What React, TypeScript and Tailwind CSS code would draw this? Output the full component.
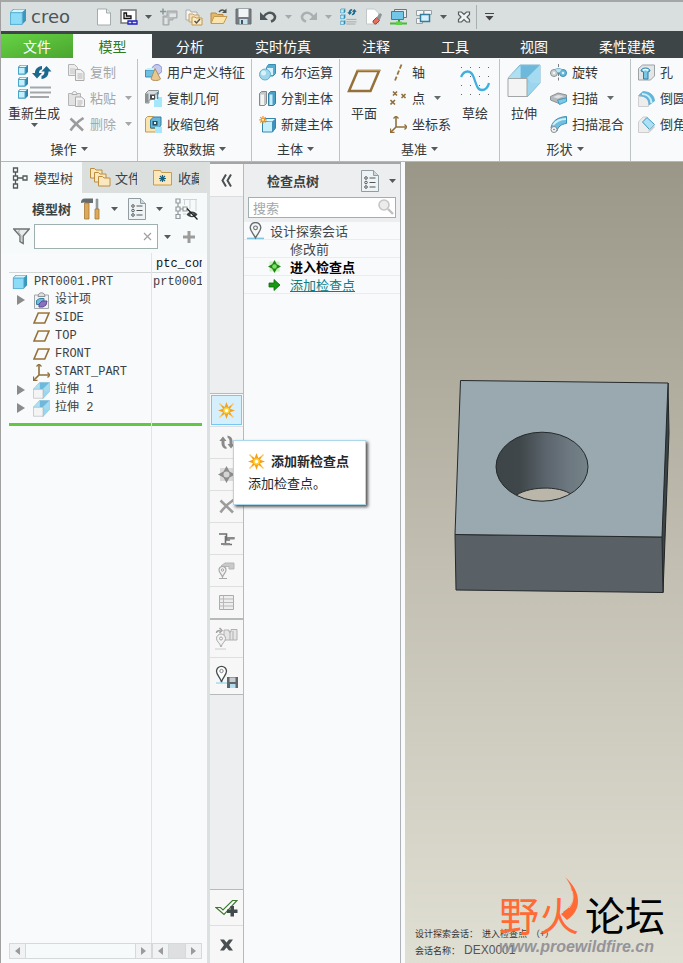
import * as React from 'react'

type IconProps = { w?: number; h?: number; box?: string; className?: string; children: React.ReactNode }

function Icon({ w = 17, h = 17, box = '0 0 17 17', className, children }: IconProps) {
  return (
    <svg width={w} height={h} viewBox={box} fill="none" className={'shrink-0 ' + (className ?? '')} aria-hidden="true">
      {children}
    </svg>
  )
}

function Caret({ className = 'text-[#555b5d]' }: { className?: string }) {
  return (
    <Icon w={7} h={4} box="0 0 7 4" className={className}>
      <path d="M0 0h7L3.5 4z" fill="currentColor" />
    </Icon>
  )
}

/* ---------- small icons ---------- */

function CubeIcon({ size = 17 }: { size?: number }) {
  return (
    <Icon w={size} h={size}>
      <path d="M1 4l3-3h12v11l-4 4H1z" fill="#3d93ba" />
      <path d="M1.500 4L4.500 1.500H15.500L12.500 4z" fill="#d3f4fd" />
      <path d="M12.500 4.500L15.500 2v9.500L12.500 15z" fill="#3a97be" />
      <path d="M1.500 4.500h11v11h-11z" fill="#8cdcf8" stroke="#5fb4d6" strokeWidth=".8" />
    </Icon>
  )
}

function PageIcon() {
  return (
    <Icon w={16} h={18} box="0 0 16 18">
      <path d="M1.500 1h9l4 4v12h-13z" fill="#fff" stroke="#a3abad" />
      <path d="M10.500 1v4h4" fill="#e6ebec" stroke="#a3abad" />
    </Icon>
  )
}

function ActivateIcon() {
  return (
    <Icon w={18} h={16} box="0 0 18 16">
      <path d="M1 1h15v13H1z" fill="#fff" stroke="#777" strokeWidth="1.500" />
      <path d="M4 4h2.500v3H11v2.500H4z" fill="#eee" stroke="#111" strokeWidth="1.300" />
      <path d="M8 12h9v3H8zM12 12v3" fill="#dfe3ff" stroke="#1d1dbb" strokeWidth="1.300" />
    </Icon>
  )
}

function AssembleIcon() {
  return (
    <Icon w={18} h={18} box="0 0 18 18">
      <path d="M7 3h10v7h-4v2h-4v5H3V8h4z" fill="#b9bdbe" stroke="#a3a8aa" />
      <path d="M9.500 5.500H16V9H9.500zM4.500 10h3v6h-3z" fill="#e2e5e6" />
      <path d="M0 3.500h6M3 .5v6" stroke="#8c9395" strokeWidth="1.500" />
    </Icon>
  )
}

function WorkDirIcon() {
  return (
    <Icon w={18} h={18} box="0 0 18 18">
      <path d="M1 2h4l1 2h6v8H1z" fill="#f5f5f3" stroke="#a9adae" />
      <path d="M4 6h4l1 1h5v7H4z" fill="#f3dfb8" stroke="#c4a36a" />
      <path d="M7 9h3l1 1h6v7H7z" fill="#fbecc8" stroke="#c09850" />
      <path d="M9.500 13l2 2 3.500-4" stroke="#555" strokeWidth="1.500" />
    </Icon>
  )
}

function OpenIcon() {
  return (
    <Icon w={18} h={17} box="0 0 18 17">
      <path d="M1 5h5l1.500 1.500H13V15H1z" fill="#e2b868" stroke="#b98c3e" />
      <path d="M1 15.500L4 8.500h13L13.500 15.500z" fill="#fbe3ac" stroke="#c49a4e" />
      <path d="M9 4c2-2.500 4.500-2.500 6-.5" stroke="#555" strokeWidth="1.500" />
      <path d="M16.500.5V5H12z" fill="#555" />
    </Icon>
  )
}

function SaveIcon({ size = 17 }: { size?: number }) {
  return (
    <Icon w={size} h={size}>
      <path d="M1 1h15v15H1z" fill="#767d80" stroke="#656c6f" />
      <path d="M3.500 1h10v8h-10z" fill="#f2f5f6" />
      <path d="M4.500 11h8v5h-8z" fill="#bfe4f4" />
      <path d="M6 12h2v4H6z" fill="#4a5053" />
    </Icon>
  )
}

function UndoIcon({ color = '#4d5659', flip = false }: { color?: string; flip?: boolean }) {
  return (
    <Icon w={17} h={13} box="0 0 17 13" className={flip ? '-scale-x-100' : ''}>
      <path d="M3.500 7C6 2.500 11 1.500 13.500 4s2 6-2.500 7.500" stroke={color} strokeWidth="2.500" />
      <path d="M0 2v8h8z" fill={color} />
    </Icon>
  )
}

function RegenIcon({ w = 35, h = 35 }: { w?: number; h?: number }) {
  return (
    <Icon w={w} h={h} box="0 0 35 35">
      {[1, 13, 25].map((y) => (
        <g key={y}>
          <path d={`M1 ${y + 2}l2-2h8v7l-2.500 2.500H1z`} fill="#2f86ac" />
          <path d={`M1.500 ${y + 2.500}h6.500v6.500h-6.500z`} fill="#c4effc" stroke="#4aa5cc" />
          <path d={`M2 ${y + 2}l1.500-1.500H10.500L8.500 ${y + 2}z`} fill="#e6f9fe" />
        </g>
      ))}
      <path d="M18 9c0-4 2.500-6.500 7-7v3.200c-2 .3-3 1.500-3 3.800h3l-5 5.500L15 9z" fill="#1b6a8d" />
      <path d="M31.500 7.500c0 4.500-2.500 7-7 7.500v-3.200c2-.3 3-1.600 3-4.300h-3l5-5.500 5 5.500z" fill="#1b6a8d" />
      <path d="M13 23.500h21M13 28.500h21M13 33h19" stroke="#a4a8aa" strokeWidth="2" />
    </Icon>
  )
}

function EraseIcon() {
  return (
    <Icon w={18} h={18} box="0 0 18 18">
      <path d="M1.500 1h8l4 4v11h-12z" fill="#fff" stroke="#c2c8ca" />
      <path d="M8 13l3.500-3.500 3 3L11 16c-1.500.5-3.500-1.500-3-3z" fill="#e2705e" stroke="#a14234" />
      <path d="M11.500 9.500L15 5l2 1.500-2.500 6z" fill="#8d9497" />
    </Icon>
  )
}

function DisplayIcon() {
  return (
    <Icon w={18} h={18} box="0 0 18 18">
      <path d="M4.500 1.500h12v8h-12z" fill="#e4ecee" stroke="#6e787b" />
      <path d="M1.500 3.500h12v8h-12z" fill="#74c6e8" stroke="#3b7f9d" />
      <path d="M9 12v4" stroke="#3c9c2b" strokeWidth="2" />
      <path d="M0 15.500h17" stroke="#4bb83a" strokeWidth="2" />
      <path d="M6 13.500h6v3.500H6z" fill="#5ed04a" />
    </Icon>
  )
}

function WindowsIcon() {
  return (
    <Icon w={18} h={16} box="0 0 18 16">
      <path d="M1.500 1.500h7v5h-7zM1.500 9.500h6v5h-6z" fill="#f5f7f7" stroke="#9aa1a3" />
      <path d="M9 1.500h7.500v4H9z" fill="#f5f7f7" stroke="#9aa1a3" />
      <path d="M5.500 5.500h9v7h-9z" fill="#d6f1fb" stroke="#347d9e" strokeWidth="1.500" />
    </Icon>
  )
}

function CloseWinIcon() {
  return (
    <Icon w={14} h={12} box="0 0 14 12">
      <path d="M1.500 1H4.500L7 3.500 9.500 1h3v2.500L10 6l2.500 2.500V11h-3L7 8.500 4.500 11h-3V8.500L4 6 1.500 3.500z" fill="#f1f3f3" stroke="#555d60" strokeWidth="1.200" />
    </Icon>
  )
}

function CopyIcon() {
  return (
    <Icon>
      <path d="M.5.500h6l3 3v8h-9z" fill="#ececec" stroke="#b4b4b4" />
      <path d="M2 5h5M2 7h5M2 9h5" stroke="#c4c4c4" />
      <path d="M7.500 5.500h5l3.500 3v8H7.500z" fill="#f2f2f2" stroke="#aaa" />
      <path d="M9.500 10h5M9.500 12h5M9.500 14h5" stroke="#b4b4b4" />
    </Icon>
  )
}

function PasteIcon() {
  return (
    <Icon>
      <path d="M.5 3.500h12v12H.5z" fill="#e2e2e2" stroke="#b6b6b6" />
      <path d="M4 4.500c0-4 5-4 5 0z" fill="#f2f2f2" stroke="#adadad" />
      <path d="M7.500 7h6l3 2.500v7h-9z" fill="#f4f4f4" stroke="#aaa" />
      <path d="M9.500 11h5M9.500 13h5M9.500 15h4" stroke="#b4b4b4" />
    </Icon>
  )
}

function DeleteIcon() {
  return (
    <Icon w={16} h={15} box="0 0 16 15">
      <path d="M1.500 1.500L14 13.500M14.500 1C9 4.500 5 8.500 1.500 13.500" stroke="#9c9c9c" strokeWidth="2.600" />
    </Icon>
  )
}

function UdfIcon() {
  return (
    <Icon>
      <circle cx="12" cy="5.500" r="5" fill="#c6caef" stroke="#8a90cf" />
      <path d="M.5 6h9v7h-9z" fill="#6cc0e2" stroke="#3a8fb6" />
      <path d="M.5 6l2-2h7v2z" fill="#c8eefa" />
      <path d="M10 4.500l5.500 10.500c-2 2-8 2-9.500 0z" fill="#e8c890" stroke="#b0905c" />
    </Icon>
  )
}

function CopyGeomIcon() {
  return (
    <Icon>
      <path d="M.5 3.500l3-3h10v3.500H10v5l-6 1v3H.5z" fill="#d9dcdd" stroke="#8b9294" />
      <path d="M.5 3.500h3v9h-3z" fill="#8b9294" />
      <path d="M5 4.500h5v5H5z" fill="#4b5153" />
      <path d="M7 6h2v2H7z" fill="#fff" />
      <path d="M9 10h8v7H9zM12 7h5v4h-5z" fill="#a6e6fb" />
      <path d="M12.500 2v7" stroke="#3390ba" strokeWidth="1.500" />
    </Icon>
  )
}

function ShrinkIcon() {
  return (
    <Icon>
      <path d="M.5 2.500l2-2h6v4H6v8h9v3.500H.5z" fill="#fae3ac" stroke="#c29a50" />
      <path d="M5.500 4l3-3h7.500v8l-2 3H5.500z" fill="#69b6d8" stroke="#2f7fa3" />
      <path d="M7.500 5h5v4.500h-5z" fill="#294b5a" />
      <path d="M9 6h2v2H9z" fill="#dff3fa" />
      <path d="M10 11h7v6h-7z" fill="#a6e6fb" />
    </Icon>
  )
}

function BooleanIcon() {
  return (
    <Icon>
      <path d="M7.500 3.500l2-3h7v9l-2.500 2.500H7.500z" fill="#56add2" stroke="#3a8db1" />
      <path d="M8 4h6v7H8z" fill="#d5f2fc" />
      <circle cx="6" cy="10.500" r="5.500" fill="#9fd6ec" stroke="#66afcc" />
      <circle cx="4.500" cy="9" r="2.500" fill="#d9f2fb" />
    </Icon>
  )
}

function SplitIcon() {
  return (
    <Icon>
      <path d="M.5 3.500l2-2H7.500v12l-2 2H.5z" fill="#c2c6c8" stroke="#84898b" />
      <path d="M1.500 4.500H5V15H1.500z" fill="#f3f4f4" />
      <path d="M9.500 3.500l2-2h5v12l-2 2h-5z" fill="#4a9fc5" stroke="#337fa1" />
      <path d="M10.500 4.500h3V15h-3z" fill="#c4edfb" />
    </Icon>
  )
}

function NewBodyIcon() {
  return (
    <Icon>
      <path d="M3.500 5.500l3-3h10v9.500l-3 4h-10z" fill="#3d93ba" stroke="#3585a9" />
      <path d="M4.500 5L7 3h9l-3 2.500z" fill="#dcf5fd" />
      <path d="M4 6h9v9.500H4z" fill="#c6effc" />
      <path d="M4 0v7.500M.2 3.800h7.500M1.300 1.200l5.300 5.300M6.600 1.200L1.300 6.500" stroke="#ee9320" strokeWidth="1.200" />
      <circle cx="4" cy="3.800" r="1" fill="#fff" />
    </Icon>
  )
}

function PlaneIcon({ w = 34, h = 24, stroke = 2.5 }: { w?: number; h?: number; stroke?: number }) {
  return (
    <Icon w={w} h={h} box="0 0 34 24">
      <path d="M10.500 2h21.500l-8.500 20H2z" stroke="#957139" strokeWidth={stroke} />
      <path d="M10 1.200h23" stroke="#c8a76a" />
    </Icon>
  )
}

function AxisIcon() {
  return (
    <Icon>
      <path d="M11.500.5L5 16.500" stroke="#96743c" strokeWidth="1.800" strokeDasharray="4.500 2" />
    </Icon>
  )
}

function PointIcon() {
  return (
    <Icon>
      <path d="M3 1.500l4 4M7 1.500l-4 4M11.500 4l4 4M15.500 4l-4 4M.5 10l4.500 4.500M5 10L.5 14.500" stroke="#8f703c" strokeWidth="1.600" />
    </Icon>
  )
}

function CsysIcon() {
  return (
    <Icon>
      <path d="M6 1v10h10M6 11l-5 5" stroke="#8f703c" strokeWidth="1.600" />
      <path d="M3.500 2.500L6 0l2.500 2.500M14.500 8.500L17 11l-2.500 2.500M.5 12.500v4h4" stroke="#8f703c" strokeWidth="1.300" />
    </Icon>
  )
}

function SketchIcon() {
  return (
    <Icon w={30} h={30} box="0 0 30 30">
      {[1, 10, 19, 28].map((y) => [1, 10, 19, 28].map((x) => <path key={x + '-' + y} d={`M${x} ${y}h1v1h-1z`} fill="#666" />))}
      <path d="M1 11C4 4 11 3 14 12s4 12 8 12c4 0 6-3 7-7" stroke="#3fb0de" strokeWidth="2.300" />
    </Icon>
  )
}

function ExtrudeIcon({ w = 34, h = 34 }: { w?: number; h?: number }) {
  return (
    <Icon w={w} h={h} box="0 0 34 34">
      <path d="M1 14L13 1h20v18L20 33z" fill="#8accea" stroke="#7eb4cb" />
      <path d="M13.500 1.500h19v17h-19z" fill="#6db9dc" />
      <path d="M1 14L13.500 1.500v12.500zM20 14L33 1v18H24z" fill="#aee0f3" />
      <path d="M20 14L33 1.500V19L20 32.500z" fill="#a2d9ef" opacity=".75" />
      <path d="M1 14.500h19v18H1z" fill="#f4f4f4" stroke="#a2a6a7" />
    </Icon>
  )
}

function RevolveIcon() {
  return (
    <Icon>
      <path d="M8.500 0v17" stroke="#7a8082" strokeDasharray="3 1.500" />
      <ellipse cx="4" cy="9" rx="3.500" ry="3.500" fill="#d0d4d5" stroke="#8b9193" />
      <ellipse cx="13" cy="9" rx="3.500" ry="3.500" fill="#69bbdd" stroke="#3c8db0" />
      <path d="M5 5.500c2-1.500 5-1.500 7 0l-2 3H7z" fill="#b9e4f3" stroke="#6fabc3" strokeWidth=".8" />
      <circle cx="4" cy="9" r="1" fill="#fff" />
      <circle cx="13" cy="9" r="1.200" fill="#d9f3fc" />
    </Icon>
  )
}

function SweepIcon() {
  return (
    <Icon>
      <path d="M.5 6.500L8 3l8.500 2v3L9 9.500v4L.5 10z" fill="#b4babc" stroke="#8c9294" />
      <path d="M3 7l5-2 6 1-6 2.500z" fill="#e0e3e4" />
      <path d="M7.500 10l9-2v3.500l-7 3z" fill="#7fc9e8" stroke="#469abf" />
    </Icon>
  )
}

function BlendIcon() {
  return (
    <Icon>
      <path d="M1 12C2 5 8 1 16.500.5v7C11 8 8 11 7 15z" fill="#6fbfe1" stroke="#3e8fb4" />
      <path d="M3 9C6 5 10 3 16 3" stroke="#d0f0fb" strokeWidth="2" />
      <circle cx="4" cy="13.500" r="3" fill="#f3f3f3" stroke="#878d8f" />
      <circle cx="4" cy="13.500" r=".8" fill="#777" />
    </Icon>
  )
}

function HoleIcon() {
  return (
    <Icon>
      <path d="M.5 4.500l4-3.500h12v11l-4 4H.5z" fill="#e3e5e6" stroke="#9da2a4" />
      <path d="M3 7c0-4 9-4 9 0l-2 1v7H5.500V8z" fill="#77c6e6" stroke="#2c80a6" />
      <path d="M5 6.500c1-1.500 4-1.500 5 0" stroke="#fff" strokeWidth="1.500" />
    </Icon>
  )
}

function RoundIcon() {
  return (
    <Icon>
      <path d="M.5 6.500h10v10h-10z" fill="#ededed" stroke="#cfcfcf" />
      <path d="M.5 5.500L5 1.500c7 0 11.500 4 11.500 9.500L11 15c0-5-3-9-10.500-9.500z" fill="#62b6da" stroke="#58a7c9" strokeWidth=".6" />
      <path d="M4 4c5.500 0 9 3.500 9.500 9" stroke="#ccedf9" strokeWidth="2.200" />
    </Icon>
  )
}

function ChamferIcon() {
  return (
    <Icon>
      <path d="M.5 6L5 1h4L5 6.500 11 12v4.500H.5z" fill="#ededed" stroke="#cdcdcd" />
      <path d="M4.500 6L9 1.500l7.500 7-5 5z" fill="#a9e2f6" stroke="#4498bd" />
      <path d="M11.500 13.500l5-5v3l-5 5z" fill="#c9cdce" />
    </Icon>
  )
}

function TreeIcon() {
  return (
    <Icon w={16} h={22} box="0 0 16 22">
      <path d="M1.500 1h4v4h-4zM1.500 9h4v4h-4zM1.500 17h4v4h-4zM11 9h4v4h-4zM3.500 5v4M3.500 13v4M5.500 11H11" stroke="#53595b" strokeWidth="1.300" />
    </Icon>
  )
}

function FoldersIcon() {
  return (
    <Icon w={21} h={21} box="0 0 21 21">
      {[0, 4, 8].map((d) => (
        <path key={d} d={`M${0.5 + d} ${1.5 + d}h4l1.500 1.500h6v8h-11.500z`} fill="#fae8c0" stroke="#c08c3c" />
      ))}
    </Icon>
  )
}

function FavoriteIcon() {
  return (
    <Icon w={19} h={17} box="0 0 19 17">
      <path d="M.5 1.500h7l1 2h10V16H.5z" fill="#fbe7b9" stroke="#c69b52" />
      <path d="M9.500 6v7M6 9.500h7M7 7l5 5M12 7l-5 5" stroke="#1c627e" strokeWidth="1.200" />
    </Icon>
  )
}

function ToolsIcon() {
  return (
    <Icon w={20} h={22} box="0 0 20 22">
      <path d="M0 5c0-3 1-4.500 4-4.500h8V5H5C3 4 2 4.500 0 5z" fill="#656c70" />
      <path d="M3.500 5h4.500v16H3.500z" fill="#dcaa5c" stroke="#a67a33" strokeWidth=".8" />
      <path d="M15 1h2v10h-2z" fill="#9aa1a4" stroke="#7b8386" strokeWidth=".5" />
      <path d="M14 11h4v10h-4z" fill="#dcaa5c" stroke="#a67a33" strokeWidth=".8" />
    </Icon>
  )
}

function ListIcon() {
  return (
    <Icon w={18} h={22} box="0 0 18 22">
      <path d="M.5.5h12l5 5v16H.5z" fill="#eef4f6" stroke="#929da1" />
      <path d="M12.500.5v5h5" fill="#cdd6d9" stroke="#929da1" />
      {[8, 12.5, 17].map((y) => (
        <g key={y}>
          <circle cx="5" cy={y} r="1.300" stroke="#555" />
          <path d={`M8.500 ${y}h6`} stroke="#555" />
        </g>
      ))}
    </Icon>
  )
}

function TreeHideIcon() {
  return (
    <Icon w={23} h={22} box="0 0 23 22">
      <path d="M1 1h4v4H1zM1 9h4v4H1zM1 16.500h4v4H1zM8 9h4v4H8zM3 5v4M3 13v3.500M5 11h3" stroke="#92999b" strokeWidth="1.200" />
      <path d="M8 1.500h14M9.500 1v6M15 1v10M21 1v12M8 16h3" stroke="#ced3d4" />
      <path d="M11.500 16.500c3-4 8-4 11 0-3 3.500-8 3.500-11 0z" fill="#3f4547" />
      <circle cx="17" cy="16.500" r="1.500" fill="#fff" />
      <path d="M12 10.500l10.500 11" stroke="#222" strokeWidth="1.300" />
    </Icon>
  )
}

function FilterIcon() {
  return (
    <Icon>
      <path d="M.8 1h15.400l-6 7v7.500L7 13.500V8z" fill="#e9ebec" stroke="#6d7375" strokeWidth="1.400" />
      <path d="M7 2.500l-2 1 3 4v5" stroke="#a8adaf" />
    </Icon>
  )
}

function PlusIcon() {
  return (
    <Icon w={12} h={12} box="0 0 12 12">
      <path d="M4.500 0h3v4.500H12v3H7.500V12h-3V7.500H0v-3h4.500z" fill="#9c9c9c" />
    </Icon>
  )
}

function DesignItemsIcon() {
  return (
    <Icon>
      <path d="M1.500 3h14v13.500h-14z" fill="#f0f1f2" stroke="#a4a8aa" />
      <path d="M5 4.500c0-5 7-5 7 0z" fill="#ddd" stroke="#8e9395" />
      <path d="M3.500 8.500l3-2H11v4l-2 2H3.500z" fill="#6bbbe0" stroke="#3881a3" />
      <path d="M6 12l3-3h5l-1 4-3 2H6z" fill="#8a73bd" stroke="#5e4a94" />
    </Icon>
  )
}

function StarIcon() {
  return (
    <Icon>
      <path d="M1.500 1.500l14 14M15.500 1.500l-14 14" stroke="#fbc763" strokeWidth="1.500" />
      <path d="M8.500 0l1.800 5L14 3l-2 3.700 5 1.800-5 1.800 2 3.700-3.700-2-1.800 5-1.800-5L3 14l2-3.700-5-1.800 5-1.800L3 3l3.700 2z" fill="#f5a01c" />
      <circle cx="8.500" cy="8.500" r="3.200" fill="#ffd335" />
      <circle cx="8.500" cy="8.500" r="1.700" fill="#fff" />
    </Icon>
  )
}

function PinIcon({ w = 16, h = 17, color = '#666c6e' }: { w?: number; h?: number; color?: string }) {
  return (
    <Icon w={w} h={h} box="0 0 16 17">
      <path d="M0 15.500h16" stroke="#7fc4e0" strokeWidth="1.500" />
      <path d="M8 15C6 11 3 8.500 3 5.500a5 5 0 0110 0C13 8.500 10 11 8 15z" fill="#f4f6f7" stroke={color} strokeWidth="1.300" />
      <circle cx="8" cy="5.500" r="1.800" stroke={color} />
    </Icon>
  )
}

function CheckpointIcon({ on = false }: { on?: boolean }) {
  return (
    <Icon w={on ? 13 : 17} h={on ? 13 : 17}>
      <path d="M2 2h13v13H2z" fill={on ? '#c9efbd' : '#dadada'} />
      <path d="M8.500 0l3 5.500 5.500 3-5.500 3-3 5.500-3-5.500L0 8.500l5.500-3z" fill={on ? '#1e8413' : '#8c8c8c'} />
      <circle cx="8.500" cy="8.500" r="3" fill={on ? '#7be066' : '#d4d4d4'} />
    </Icon>
  )
}

function GoArrowIcon() {
  return (
    <Icon w={13} h={12} box="0 0 13 12">
      <path d="M1 4h5V.5L12 6l-6 5.500V8H1z" fill="#179a12" stroke="#0d6b0a" strokeWidth=".8" />
    </Icon>
  )
}

function SearchIcon() {
  return (
    <Icon w={16} h={16} box="0 0 16 16">
      <circle cx="6" cy="6" r="5" fill="#ececec" stroke="#c6c6c6" strokeWidth="1.600" />
      <path d="M10 10l5 5" stroke="#c0c0c0" strokeWidth="2.400" />
    </Icon>
  )
}

function RefreshGrayIcon() {
  return (
    <Icon w={16} h={15} box="0 0 16 15">
      <path d="M2.500 8.500V6H.3L4 1.500 7.500 6H5.500v2.500c0 2 .8 3 2 3.500v2c-3-.3-5-2.500-5-5.500z" fill="#8a8a8a" />
      <path d="M13.500 6v3h2.200L12 13.500 8.500 9h2V6c0-1.500-.8-2.800-2-3.500V.5c3 .5 5 2.500 5 5.500z" fill="#8a8a8a" />
    </Icon>
  )
}

function StampIcon() {
  return (
    <Icon w={17} h={14} box="0 0 17 14">
      <path d="M1 2h7.500v6h3.500M5 12.500h9M7.500 4v7.500M8.500 6h8" stroke="#6f6f6f" strokeWidth="1.600" />
      <path d="M3 11h9v2H3zM8.500 5h8v2.500h-6z" fill="#8a8a8a" />
    </Icon>
  )
}

function PinTagIcon() {
  return (
    <Icon>
      <path d="M3 4l4-3h9v6h-5V4.500H6z" fill="#c9c9c9" stroke="#b5b5b5" />
      <path d="M4.500 15C3.500 12 1 10.500 1 8a3.500 3.500 0 017 0c0 2.500-2.500 4-3.500 7zM1 16.500h8" fill="#f3f3f3" stroke="#a8a8a8" strokeWidth="1.200" />
      <circle cx="4.500" cy="8" r="1.200" stroke="#a8a8a8" />
    </Icon>
  )
}

function TableIcon() {
  return (
    <Icon>
      <path d="M1.500 1.500h14v14h-14z" fill="#eee" stroke="#ababab" />
      <path d="M5.500 1.500v14M1.500 5h14M1.500 8.500h14M1.500 12h14" stroke="#b9b9b9" />
    </Icon>
  )
}

function PinOpenIcon() {
  return (
    <Icon w={23} h={23} box="0 0 23 23">
      <path d="M9 3h5v2h2V2.500h6V13H9z" fill="#e5e5e5" stroke="#b0b0b0" />
      <path d="M15 4v9M18 4v9" stroke="#b0b0b0" />
      <path d="M1.500 6c0-2 1-2.500 4-2.500M4.500 1l2.500 2.500L4.500 6" stroke="#a2a2a2" strokeWidth="1.500" />
      <path d="M6 20C5 16 1.500 14.500 1.500 11.500a4.500 4.500 0 019 0C10.500 14.500 7 16 6 20z" fill="#f3f3f3" stroke="#a6a6a6" />
      <circle cx="6" cy="11.500" r="1.500" stroke="#a6a6a6" />
      <path d="M0 22h11" stroke="#ccc" />
    </Icon>
  )
}

function PinSaveIcon() {
  return (
    <Icon w={23} h={23} box="0 0 23 23">
      <path d="M1 18h13" stroke="#a6dcee" strokeWidth="1.500" />
      <path d="M6.500 17C5.500 12.500 1.500 10 1.500 6.300a5 5 0 0110 0C11.500 10 7.500 12.500 6.500 17z" fill="#fff" stroke="#474d4f" strokeWidth="1.300" />
      <circle cx="6.500" cy="6" r="1.700" stroke="#888" />
      <path d="M12 12h11v11H12z" fill="#5f676a" />
      <path d="M14.500 12.500h6V17h-6z" fill="#c8ced0" />
      <path d="M15 19h5.500v4H15z" fill="#b0dcec" />
    </Icon>
  )
}

function AcceptIcon() {
  return (
    <Icon w={23} h={18} box="0 0 23 18">
      <path d="M1 8.500h4.500L8 11 17.500 1.500H22L9 15.500z" fill="#fff" stroke="#3c7a2c" strokeWidth="1.200" />
      <path d="M15.500 7h3.500v3.500h3.500V14H19v3.500h-3.500V14H12v-3.500h3.500z" fill="#434a4c" />
    </Icon>
  )
}

function CollapseIcon() {
  return (
    <Icon w={11} h={13} box="0 0 11 13">
      <path d="M5 .5L1.500 6.500 5 12.500M10 .5L6.500 6.500l3.500 6" stroke="#4b5052" strokeWidth="2" />
    </Icon>
  )
}

/* ---------- ribbon ---------- */

type Cmd = { label: string; icon: React.ReactNode; caret?: boolean; off?: boolean }

function CommandList({ items }: { items: Cmd[] }) {
  return (
    <div className="flex flex-col">
      {items.map((c) => (
        <button key={c.label} disabled={c.off} className="flex h-[26px] items-center gap-[5px] whitespace-nowrap disabled:text-[#a5a8a9]">
          <span className="flex w-[17px] justify-center">{c.icon}</span>
          <span>{c.label}</span>
          {c.caret && <Caret className={c.off ? 'ml-1 text-[#a5a8a9]' : 'ml-1 text-[#666c6e]'} />}
        </button>
      ))}
    </div>
  )
}

function BigCommand({ label, icon, caret }: { label: string; icon: React.ReactNode; caret?: boolean }) {
  return (
    <button className="flex h-[78px] flex-col items-center whitespace-nowrap pt-1">
      <span className="flex h-9 items-center">{icon}</span>
      <span className="mt-1 leading-5">{label}</span>
      {caret && <Caret />}
    </button>
  )
}

function RibbonGroup({ title, className, children }: { title?: string; className: string; children: React.ReactNode }) {
  return (
    <section className="flex shrink-0 flex-col border-r border-[#bcc4c6]">
      <div className={'flex ' + className}>{children}</div>
      {title && (
        <button className="flex h-6 items-center justify-center gap-1 whitespace-nowrap">
          {title}
          <Caret />
        </button>
      )}
    </section>
  )
}

function Ribbon() {
  return (
    <div className="flex overflow-hidden border-b border-[#aebabc] bg-[#f8fafc] pt-px text-[13px] text-[#33383a]">
      <RibbonGroup title="操作" className="gap-2 pl-[7px] pr-[5px]">
        <BigCommand label="重新生成" icon={<RegenIcon />} caret />
        <CommandList
          items={[
            { label: '复制', icon: <CopyIcon />, off: true },
            { label: '粘贴', icon: <PasteIcon />, caret: true, off: true },
            { label: '删除', icon: <DeleteIcon />, caret: true, off: true },
          ]}
        />
      </RibbonGroup>
      <RibbonGroup title="获取数据" className="pl-[7px] pr-[6px]">
        <CommandList
          items={[
            { label: '用户定义特征', icon: <UdfIcon /> },
            { label: '复制几何', icon: <CopyGeomIcon /> },
            { label: '收缩包络', icon: <ShrinkIcon /> },
          ]}
        />
      </RibbonGroup>
      <RibbonGroup title="主体" className="pl-[7px] pr-[6px]">
        <CommandList
          items={[
            { label: '布尔运算', icon: <BooleanIcon /> },
            { label: '分割主体', icon: <SplitIcon /> },
            { label: '新建主体', icon: <NewBodyIcon /> },
          ]}
        />
      </RibbonGroup>
      <RibbonGroup title="基准" className="gap-[9px] pl-[7px] pr-[9px]">
        <BigCommand label="平面" icon={<PlaneIcon />} />
        <CommandList
          items={[
            { label: '轴', icon: <AxisIcon /> },
            { label: '点', icon: <PointIcon />, caret: true },
            { label: '坐标系', icon: <CsysIcon /> },
          ]}
        />
        <BigCommand label="草绘" icon={<SketchIcon />} />
      </RibbonGroup>
      <RibbonGroup title="形状" className="gap-[9px] pl-[7px] pr-[6px]">
        <BigCommand label="拉伸" icon={<ExtrudeIcon />} />
        <CommandList
          items={[
            { label: '旋转', icon: <RevolveIcon /> },
            { label: '扫描', icon: <SweepIcon />, caret: true },
            { label: '扫描混合', icon: <BlendIcon /> },
          ]}
        />
      </RibbonGroup>
      <RibbonGroup className="pl-[7px]">
        <CommandList
          items={[
            { label: '孔', icon: <HoleIcon /> },
            { label: '倒圆角', icon: <RoundIcon />, caret: true },
            { label: '倒角', icon: <ChamferIcon />, caret: true },
          ]}
        />
      </RibbonGroup>
    </div>
  )
}

/* ---------- title bar and tabs ---------- */

function TitleBar() {
  const tools: { name: string; icon: React.ReactNode; menu?: boolean; off?: boolean }[] = [
    { name: '新建', icon: <PageIcon /> },
    { name: '激活', icon: <ActivateIcon />, menu: true },
    { name: '组装', icon: <AssembleIcon /> },
    { name: '工作目录', icon: <WorkDirIcon /> },
    { name: '打开', icon: <OpenIcon /> },
    { name: '保存', icon: <SaveIcon /> },
    { name: '撤销', icon: <UndoIcon />, menu: true, off: true },
    { name: '重做', icon: <UndoIcon color="#aab0b2" flip />, menu: true, off: true },
    { name: '重新生成', icon: <RegenIcon w={17} h={17} /> },
    { name: '拭除', icon: <EraseIcon /> },
    { name: '显示', icon: <DisplayIcon /> },
    { name: '窗口', icon: <WindowsIcon />, menu: true },
    { name: '关闭', icon: <CloseWinIcon /> },
  ]
  return (
    <header className="flex h-[29px] items-center bg-[#d9dfdf]">
      <div className="flex w-[90px] shrink-0 items-center gap-1 pl-2">
        <CubeIcon size={18} />
        <span className="font-['DejaVu_Sans'] text-lg leading-5 text-[#4b5457]">creo</span>
      </div>
      {tools.map((t) => (
        <React.Fragment key={t.name}>
          <button aria-label={t.name} className="flex h-6 w-[25px] shrink-0 items-center justify-center">
            {t.icon}
          </button>
          {t.menu && (
            <button aria-label={t.name + '菜单'} className="flex h-6 w-[15px] shrink-0 items-center justify-center">
              <Caret className={t.off ? 'text-[#a5abad]' : 'text-[#555b5d]'} />
            </button>
          )}
        </React.Fragment>
      ))}
      <div className="h-6 w-px shrink-0 bg-[#a9b0b1]" />
      <button aria-label="自定义" className="flex h-6 w-6 items-center justify-center">
        <Icon w={9} h={8} box="0 0 9 8">
          <path d="M0 .5h9" stroke="#444" />
          <path d="M.5 3h8L4.500 7.500z" fill="#444" />
        </Icon>
      </button>
    </header>
  )
}

function TabBar() {
  const tabs = ['分析', '实时仿真', '注释', '工具', '视图', '柔性建模']
  return (
    <nav className="flex h-[27px] overflow-hidden bg-[#3d4547] pt-[3px] text-sm leading-6 text-white">
      <button className="w-[72px] shrink-0 bg-linear-to-br from-[#66d344] to-[#4ba52f]">文件</button>
      <button className="w-[79px] shrink-0 bg-[#f8fafc] text-[#2f7a22]">模型</button>
      {tabs.map((t) => (
        <button key={t} className="shrink-0 whitespace-nowrap pl-6 pr-[27px]">{t}</button>
      ))}
    </nav>
  )
}

/* ---------- model tree ---------- */

const treeRows = [
  { name: '设计项', icon: <DesignItemsIcon />, open: true },
  { name: 'SIDE', icon: <PlaneIcon w={17} h={12} stroke={3.2} /> },
  { name: 'TOP', icon: <PlaneIcon w={17} h={12} stroke={3.2} /> },
  { name: 'FRONT', icon: <PlaneIcon w={17} h={12} stroke={3.2} /> },
  { name: 'START_PART', icon: <CsysIcon /> },
  { name: '拉伸 1', icon: <ExtrudeIcon w={17} h={17} />, open: true },
  { name: '拉伸 2', icon: <ExtrudeIcon w={17} h={17} />, open: true },
]

function Arrow({ left = false }: { left?: boolean }) {
  return (
    <Icon w={5} h={8} box="0 0 5 8">
      <path d={left ? 'M5 0v8L0 4z' : 'M0 0v8l5-4z'} fill="#9b9b9b" />
    </Icon>
  )
}

function ScrollBar({ className, track }: { className: string; track: string }) {
  return (
    <div className={'flex h-4 border border-[#d5d9da] ' + className}>
      <button aria-label="向左滚动" className="flex w-[15px] items-center justify-center bg-[#f1f2f3]">
        <Arrow left />
      </button>
      <div className={'flex-1 border-x border-[#d5d9da] ' + track} />
      <button aria-label="向右滚动" className="flex w-[15px] items-center justify-center bg-[#f1f2f3]">
        <Arrow />
      </button>
    </div>
  )
}

function ModelTree() {
  return (
    <aside className="flex w-[209px] shrink-0 flex-col border-r-3 border-[#dbe1e1] bg-[#f8fafc] text-[13px] text-[#3c4143]">
      <div className="flex h-[31px] bg-[#dbe0df]">
        <button className="flex w-[81px] shrink-0 items-center gap-1.5 whitespace-nowrap bg-[#f6fafa] pl-[11px]">
          <TreeIcon />
          模型树
        </button>
        <button className="flex w-[63px] shrink-0 items-center gap-1 overflow-hidden whitespace-nowrap pl-2">
          <FoldersIcon />
          <span className="w-[22px] overflow-hidden text-left">文件夹</span>
        </button>
        <button className="flex min-w-0 items-center gap-1.5 overflow-hidden whitespace-nowrap pl-2">
          <FavoriteIcon />
          <span className="w-[21px] overflow-hidden text-left">收藏夹</span>
        </button>
      </div>

      <div className="flex h-[31px] items-center bg-[#f6fafa] pl-[31px]">
        <h2 className="mr-2.5 font-bold">模型树</h2>
        <button aria-label="设置" className="flex items-center gap-2.5">
          <ToolsIcon />
          <Caret />
        </button>
        <button aria-label="显示" className="ml-2.5 flex items-center gap-2.5">
          <ListIcon />
          <Caret />
        </button>
        <button aria-label="树列" className="ml-3">
          <TreeHideIcon />
        </button>
      </div>

      <div className="flex items-center bg-[#f6fafa] pb-1 pl-3">
        <FilterIcon />
        <div className="relative ml-1">
          <input aria-label="过滤" className="block h-[25px] w-[124px] border border-[#9fb0b1] bg-white px-1 outline-none" />
          <button aria-label="清除" className="absolute right-1.5 top-2">
            <Icon w={9} h={9} box="0 0 9 9">
              <path d="M1 1l7 7M8 1L1 8" stroke="#a0a0a0" strokeWidth="1.200" />
            </Icon>
          </button>
        </div>
        <button aria-label="过滤菜单" className="ml-1.5">
          <Caret />
        </button>
        <button aria-label="添加" className="ml-3">
          <PlusIcon />
        </button>
      </div>

      <div className="relative ml-2 mr-[5px] flex-1">
        <table className="w-full table-fixed text-left font-['Liberation_Mono','Noto_Sans_CJK_SC',monospace] text-xs">
          <thead>
            <tr className="h-[19px] border-b border-[#d3d7d8]">
              <th className="w-[142px] p-0" aria-label="名称" />
              <th className="overflow-hidden whitespace-nowrap p-0 pl-[5px] pt-[3px] font-normal leading-4 text-[#111]">ptc_common_name</th>
            </tr>
          </thead>
          <tbody>
            <tr className="h-[18px]">
              <td className="p-0">
                <div className="flex h-[18px] items-center gap-1.5 pl-[3px]">
                  <CubeIcon size={16} />
                  PRT0001.PRT
                </div>
              </td>
              <td className="overflow-hidden whitespace-nowrap p-0 pl-0.5">prt0001</td>
            </tr>
            {treeRows.map((r) => (
              <tr key={r.name}>
                <td className="p-0" colSpan={2}>
                  <div className="flex h-[18px] items-center gap-[5px] pl-2">
                    <span className="flex w-[11px] shrink-0">
                      {r.open && (
                        <Icon w={8} h={10} box="0 0 8 10">
                          <path d="M0 0v10l8-5z" fill="#8b8b8b" />
                        </Icon>
                      )}
                    </span>
                    <span className="flex w-[17px] shrink-0 justify-center">{r.icon}</span>
                    <span>{r.name}</span>
                  </div>
                </td>
              </tr>
            ))}
          </tbody>
        </table>
        <div className="mt-1.5 h-[3px] bg-[#62c646]" />
        <div className="absolute inset-y-0 left-[142px] w-px bg-[#e1e4e6]" />
      </div>

      <div className="mb-1 ml-2 mr-[5px] flex">
        <ScrollBar className="flex-1" track="bg-[#f6fafb]" />
        <ScrollBar className="w-[50px]" track="bg-[#dedfe1]" />
      </div>
    </aside>
  )
}

/* ---------- checkpoint side bar ---------- */

function CheckpointBar() {
  const tools = [
    { name: '更新', icon: <RefreshGrayIcon /> },
    { name: '进入检查点', icon: <CheckpointIcon /> },
    { name: '删除', icon: <DeleteIcon /> },
    { name: '合并', icon: <StampIcon /> },
    { name: '标记', icon: <PinTagIcon /> },
    { name: '表', icon: <TableIcon /> },
  ]
  return (
    <div className="flex w-[34px] shrink-0 flex-col border-r border-[#b7babb] bg-[#edeef0]">
      <button aria-label="折叠" className="flex h-[33px] items-center justify-center border-b border-[#dcdddf] bg-[#f8f8f9]">
        <CollapseIcon />
      </button>
      <div className="mt-[196px] flex flex-col border-y border-[#b7babb] bg-[#f7f7f8]">
        <div className="relative">
          <button aria-label="添加新检查点" className="m-px flex h-[30px] w-[31px] items-center justify-center border border-[#74c8f3] bg-[#d5f0fc]">
            <StarIcon />
          </button>
          <div role="tooltip" className="absolute left-[23px] top-[46px] z-10 h-[65px] w-[133px] border border-[#abd8ea] bg-white pl-3.5 pt-[9px] text-[13px] leading-[22px] text-[#25292b] shadow-[2px_2px_3px_#555]">
            <div className="flex items-center gap-1.5 whitespace-nowrap font-bold">
              <StarIcon />
              添加新检查点
            </div>
            <p className="whitespace-nowrap">添加检查点。</p>
          </div>
        </div>
        {tools.map((t) => (
          <button key={t.name} aria-label={t.name} className="flex h-8 items-center justify-center border-t border-[#dedfe0]">
            {t.icon}
          </button>
        ))}
        <button aria-label="打开会话" className="flex h-[39px] items-center justify-center border-t-2 border-[#b7babb]">
          <PinOpenIcon />
        </button>
        <button aria-label="保存会话" className="flex h-[37px] items-center justify-center border-t border-[#dedfe0]">
          <PinSaveIcon />
        </button>
      </div>
      <div className="mt-auto flex flex-col border-t border-[#b7babb] bg-[#f7f7f8]">
        <button aria-label="确认" className="flex h-9 items-center justify-center border-b border-[#dedfe0]">
          <AcceptIcon />
        </button>
        <button aria-label="退出" className="flex h-[37px] items-center justify-center">
          <Icon w={13} h={12} box="0 0 13 12">
            <path d="M0 .5h4l2.500 3L9 .5h4L9 6l4 5.500H9l-2.500-3-2.500 3H0L4 6z" fill="#4a4f51" />
          </Icon>
        </button>
      </div>
    </div>
  )
}

function CheckpointTree() {
  return (
    <section className="flex w-[157px] shrink-0 flex-col border-r border-[#aeb2b4] bg-[#f8fafc] text-[13px] text-[#43484a]">
      <div className="bg-[#edeef0] pb-1">
        <div className="flex h-[33px] items-center pl-[23px]">
          <h2 className="font-bold text-[#3b4042]">检查点树</h2>
          <button aria-label="显示" className="ml-auto mr-1 flex items-center gap-2.5">
            <ListIcon />
            <Caret />
          </button>
        </div>
        <div className="relative mx-1">
          <input aria-label="搜索" placeholder="搜索" className="block h-[21px] w-full border border-[#9fb0b1] bg-white px-1 outline-none placeholder:text-[#a3a7a9]" />
          <span className="absolute right-0.5 top-0.5">
            <SearchIcon />
          </span>
        </div>
      </div>
      <ul className="leading-[17px]">
        <li className="flex h-[18px] items-center gap-1.5 border-b border-[#eaedf0] pl-[3px]">
          <PinIcon w={17} h={18} />
          设计探索会话
        </li>
        <li className="flex h-[18px] items-center border-b border-[#eaedf0] pl-[46px]">修改前</li>
        <li className="flex h-[18px] items-center gap-[9px] border-b border-[#eaedf0] pl-6 font-bold text-black">
          <CheckpointIcon on />
          进入检查点
        </li>
        <li className="flex h-[18px] items-center gap-[9px] border-b border-[#eaedf0] pl-6">
          <GoArrowIcon />
          <a href="#add" className="text-[#0d7f83] underline">添加检查点</a>
        </li>
      </ul>
    </section>
  )
}

/* ---------- graphics window ---------- */

function Part() {
  return (
    <svg width="222" height="220" viewBox="0 0 222 220" className="absolute left-[45px] top-[214px]" role="img" aria-label="PRT0001">
      <defs>
        <linearGradient id="bore" x1="0" x2="1">
          <stop offset="0" stopColor="#3d4548" />
          <stop offset=".26" stopColor="#3f474a" />
          <stop offset=".55" stopColor="#5c656d" />
          <stop offset=".8" stopColor="#6d7880" />
          <stop offset="1" stopColor="#748487" />
        </linearGradient>
        <clipPath id="hole">
          <ellipse cx="92" cy="90.700" rx="46" ry="34.500" />
        </clipPath>
      </defs>
      <path d="M218 7l1 50-6 159.500-1.500-55.500z" fill="#3c4447" stroke="#1f2426" />
      <path d="M5 158.500l207 2.500 1 55.500L6 214z" fill="#596066" stroke="#24292b" />
      <path d="M10.500 4.500L218 7l-6 154-207-2.500z" fill="#9aa9af" stroke="#24292b" />
      <ellipse cx="92" cy="90.700" rx="46" ry="34.500" fill="url(#bore)" />
      <g clipPath="url(#hole)">
        <path d="M64 121c12-11 46-12 58-2v10H64z" fill="#bab7aa" stroke="#24292b" />
      </g>
      <ellipse cx="92" cy="90.700" rx="46" ry="34.500" stroke="#24292b" fill="none" />
    </svg>
  )
}

function Flame() {
  return (
    <svg width="19" height="44" viewBox="0 0 19 44" className="absolute left-[62px] top-0" aria-hidden="true">
      <path d="M4 0c9 8 13 16 13 24 0 8-4 14-11 19L0 37c8-5 12-9 12-16C12 13 9 6 4 0z" fill="#ff6a35" />
      <path d="M9 10c3 5 4 10 2 15-2 5-6 8-9 10l3 4c6-4 9-8 9-14 0-6-2-11-5-15z" fill="#ff6a35" />
      <path d="M11 14c2 6 1 12-3 17" stroke="#e4dfd0" strokeWidth=".8" fill="none" />
    </svg>
  )
}

function Canvas() {
  return (
    <main className="relative min-w-0 flex-1 overflow-hidden bg-linear-to-b from-[#9a9788] via-[#c2bfb2] to-[#e0dfd3]">
      <Part />
      <div className="absolute bottom-1 left-2.5 whitespace-pre text-[9px] leading-4 text-[#333]">
        <p>设计探索会话：  进入检查点  （+）</p>
        <p>会话名称：  <span className="font-['Liberation_Sans'] text-xs leading-4 text-[#555]">DEX0001</span></p>
      </div>
      <div className="absolute bottom-2 left-[94px] h-[78px] w-[168px]">
        <Flame />
        <p className="whitespace-nowrap pt-3 text-[40px] leading-[50px] text-black">
          <span className="mr-1.5 text-[#ff6a35]">野火</span>
          论坛
        </p>
        <p className="whitespace-nowrap font-['Liberation_Sans'] text-base font-bold italic leading-4 text-[#94949a]">www.proewildfire.cn</p>
      </div>
    </main>
  )
}

export default function App() {
  return (
    <div className="flex min-h-screen flex-col border-l border-t-2 border-l-[#a0a0a0] border-t-[#a5a7a7] bg-[#f8fafc] font-['Noto_Sans_CJK_SC',sans-serif]">
      <TitleBar />
      <TabBar />
      <Ribbon />
      <div className="flex flex-1">
        <ModelTree />
        <div className="flex shrink-0 border-t-2 border-[#a3a5a6]">
          <CheckpointBar />
          <CheckpointTree />
        </div>
        <div className="w-1 shrink-0 bg-[#f8fafc]" />
        <Canvas />
      </div>
    </div>
  )
}
